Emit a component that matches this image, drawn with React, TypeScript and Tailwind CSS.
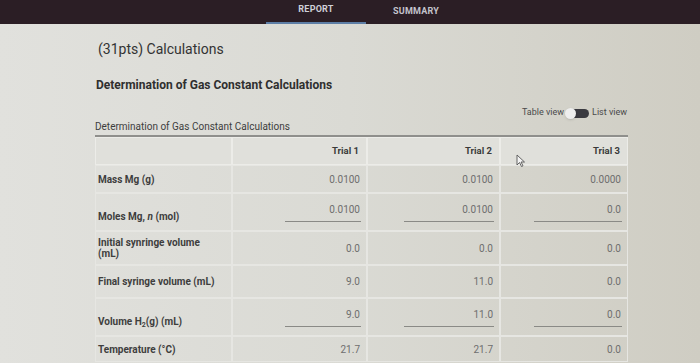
import React from 'react';

type Row = {
  label: React.ReactNode;
  values: string[];
  height: string;
  computed?: boolean;
};

const ROWS: Row[] = [
  { label: 'Mass Mg (g)', values: ['0.0100', '0.0100', '0.0000'], height: 'h-[28px]' },
  {
    label: (
      <>
        Moles Mg, <i>n</i> (mol)
      </>
    ),
    values: ['0.0100', '0.0100', '0.0'],
    height: 'h-[38px]',
    computed: true,
  },
  {
    label: (
      <>
        Initial synringe volume
        <br />
        (mL)
      </>
    ),
    values: ['0.0', '0.0', '0.0'],
    height: 'h-[34px]',
  },
  { label: 'Final syringe volume (mL)', values: ['9.0', '11.0', '0.0'], height: 'h-[33px]' },
  {
    label: (
      <>
        Volume H<sub className="text-[7px]">2</sub>(g) (mL)
      </>
    ),
    values: ['9.0', '11.0', '0.0'],
    height: 'h-[38px]',
    computed: true,
  },
  { label: 'Temperature (°C)', values: ['21.7', '21.7', '0.0'], height: 'h-[26px]' },
];

const UNDERLINE_W = ['w-[76px]', 'w-[90px]', 'w-[88px]'];

export default function App() {
  return (
    <div
      className="w-[700px] h-[363px] overflow-hidden relative bg-linear-to-r from-[#e1e1dd] via-[#dadad4] to-[#cfcdc3]"
      style={{ fontFamily: 'Roboto, "Liberation Sans", sans-serif' }}
    >
      {/* top tabs */}
      <div className="h-[24px] bg-[#2b1e25] flex pl-[266px]">
        <div className="w-[100px] flex flex-col items-center justify-between pt-[3px]">
          <span className="text-[9px] font-bold tracking-wide text-[#cfd0d8]">REPORT</span>
          <div className="h-[2px] w-full bg-[#5d7ea6]" />
        </div>
        <div className="w-[100px] flex justify-center pt-[5px]">
          <span className="text-[9px] font-bold tracking-wide text-[#c4c4cc]">SUMMARY</span>
        </div>
      </div>

      <div className="ml-[95px] w-[533px]">
        <h1 className="mt-[16px] ml-[3px] text-[14px] text-[#333] leading-[18px]">(31pts) Calculations</h1>
        <h2 className="mt-[20px] ml-[1px] text-[12px] font-bold text-[#2f2f2f] leading-[14px]">
          Determination of Gas Constant Calculations
        </h2>

        <div className="mt-[15px] flex justify-end items-center gap-[3px] pr-[1px] text-[9px] text-[#4a4a4a] h-[12px]">
          <span>Table view</span>
          <span className="relative w-[22px] h-[9px] rounded-full bg-[#3a3a40]">
            <span className="absolute left-[-2px] top-[-1px] w-[11px] h-[11px] rounded-full bg-[#eeeeee] shadow" />
          </span>
          <span>List view</span>
        </div>

        <div className="mt-[2px] text-[10px] text-[#3d3d3d] leading-[12px]">
          Determination of Gas Constant Calculations
        </div>

        <div className="mt-[2px] border-t-2 border-[#8f8f8c]">
          <div className="grid grid-cols-[137px_135px_133px_128px] h-[28px]">
            <div className="border border-[#ecece8] bg-[#e0e0db]" />
            {['Trial 1', 'Trial 2', 'Trial 3'].map((t) => (
              <div
                key={t}
                className="border border-[#ecece8] bg-[#e0e0db] flex items-center justify-end pr-[7px] text-[9.5px] font-bold text-[#3a3a3a]"
              >
                {t}
              </div>
            ))}
          </div>

          {ROWS.map((row, i) => (
            <div key={i} className={`grid grid-cols-[137px_135px_133px_128px] ${row.height}`}>
              <div
                className={`border border-[#e6e6e2] flex px-[2px] ${
                  row.computed ? 'items-end pb-[8px]' : 'items-center'
                } text-[10px] font-bold text-[#3e3e3e] leading-[11px]`}
              >
                <span>{row.label}</span>
              </div>
              {row.values.map((v, j) => (
                <div
                  key={j}
                  className={`border border-[#e6e6e2] flex ${row.computed ? 'items-end pb-[8px]' : 'items-center'} justify-end pr-[5px]`}
                >
                  {row.computed ? (
                    <div className={`${UNDERLINE_W[j]} border-b border-[#8a8a86] text-right text-[10px] text-[#6e6e6e] pb-[4px] pr-[1px]`}>
                      {v}
                    </div>
                  ) : (
                    <span className="text-[10px] text-[#6e6e6e] pr-[1px]">{v}</span>
                  )}
                </div>
              ))}
            </div>
          ))}
        </div>
      </div>

      {/* mouse pointer */}
      <svg className="absolute left-[516px] top-[154px]" width="10" height="14" viewBox="0 0 10 14">
        <path d="M1 1 L1 11 L3.5 8.5 L5.5 12.5 L7 11.8 L5 8 L8.5 8 Z" fill="#f4f4f4" stroke="#555" strokeWidth="0.9" />
      </svg>
    </div>
  );
}
